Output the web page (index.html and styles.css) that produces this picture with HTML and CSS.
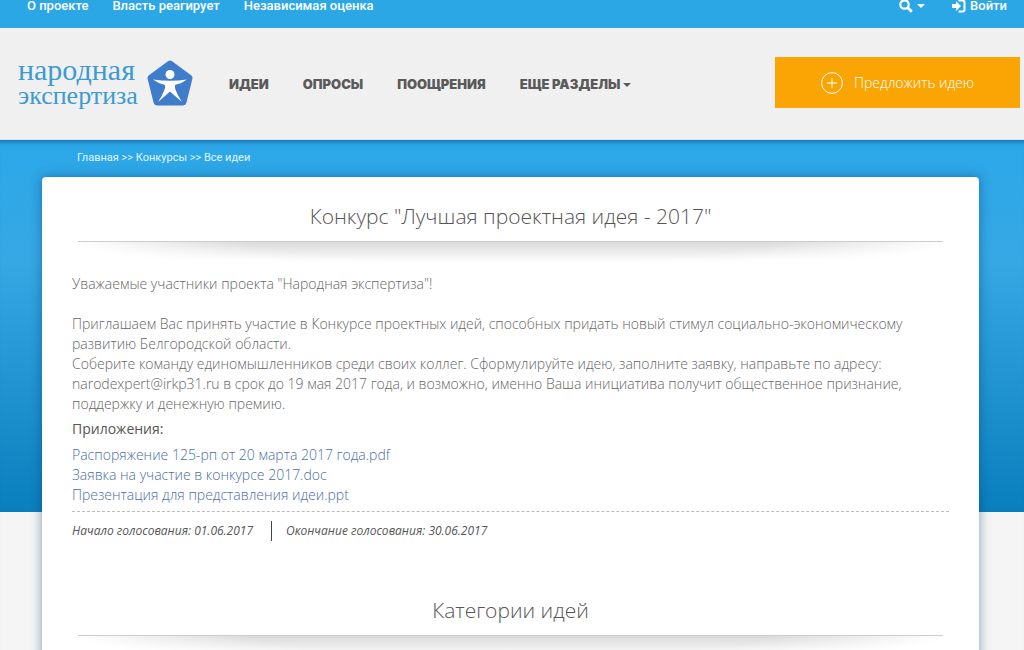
FILE: index.html
```html
<!DOCTYPE html>
<html lang="ru">
<head>
  <meta charset="UTF-8" />
  <meta name="viewport" content="width=device-width, initial-scale=1.0" />
  <title>Народная экспертиза</title>
  <link rel="stylesheet" href="styles.css">
</head>
<body>
  <div class="topbar">
    <nav class="topbar-links">
      <a href="#">О проекте</a>
      <a href="#">Власть реагирует</a>
      <a href="#">Независимая оценка</a>
    </nav>
    <div class="topbar-tools">
      <button class="search-btn" type="button" aria-label="Поиск">
        <svg width="14" height="14" viewBox="0 0 14 14"><circle cx="5.5" cy="5.5" r="4.2" fill="none" stroke="#fff" stroke-width="2.2"/><path d="M8.8 8.8l4 4" stroke="#fff" stroke-width="2.8"/></svg>
        <span class="caret"></span>
      </button>
      <a class="login" href="#">
        <svg width="14" height="14" viewBox="0 0 14 14"><path d="M0 5h4V2l5 5-5 5V9H0z" fill="#fff"/><path d="M6.5 1.5h4.3a1.7 1.7 0 0 1 1.7 1.7v7.6a1.7 1.7 0 0 1-1.7 1.7H6.5" fill="none" stroke="#fff" stroke-width="2"/></svg>
        Войти
      </a>
    </div>
  </div>

  <header class="header">
    <a class="logo" href="#">
      <span class="logo-text">
        <span class="logo-top">народная</span>
        <span>экспертиза</span>
      </span>
      <svg width="46" height="46" viewBox="0 0 46 46">
        <path d="M23 4L42 18L36 42H10L4 18Z" fill="#3f7dcc" stroke="#3f7dcc" stroke-width="7" stroke-linejoin="round"/>
        <circle cx="23" cy="14.5" r="4.5" fill="#fff"/>
        <path d="M6 19.5Q23 22 40 19.5Q34 24 28 25Q27.5 28 29 31Q31 36 35 42Q28 36 23 31.5Q18 36 11 42Q15 36 17 31Q18.5 28 18 25Q12 24 6 19.5Z" fill="#fff"/>
      </svg>
    </a>
    <nav class="menu">
      <a href="#">Идеи</a>
      <a href="#">Опросы</a>
      <a href="#">Поощрения</a>
      <a href="#">Еще разделы <span class="caret"></span></a>
    </nav>
    <button class="propose" type="button">
      <svg width="22" height="22" viewBox="0 0 22 22" fill="none" stroke="#fff"><circle cx="11" cy="11" r="10.4"/><path d="M11 6v10M6 11h10"/></svg>
      Предложить идею
    </button>
  </header>

  <main class="content">
    <nav class="breadcrumbs">
      <a href="#">Главная</a> &gt;&gt; <a href="#">Конкурсы</a> &gt;&gt; <a href="#">Все идеи</a>
    </nav>

    <div class="card">
      <h1 class="title">Конкурс "Лучшая проектная идея - 2017"</h1>
      <div class="divider"></div>

      <div class="text">
        <p>Уважаемые участники проекта "Народная экспертиза"!</p>
        <p>Приглашаем Вас принять участие в Конкурсе проектных идей, способных придать новый стимул социально-экономическому развитию Белгородской области.<br>
        Соберите команду единомышленников среди своих коллег. Сформулируйте идею, заполните заявку, направьте по адресу: narodexpert@irkp31.ru в срок до 19 мая 2017 года, и возможно, именно Ваша инициатива получит общественное признание, поддержку и денежную премию.</p>
      </div>

      <h2 class="files-title">Приложения:</h2>
      <ul class="files">
        <li><a href="#">Распоряжение 125-рп от 20 марта 2017 года.pdf</a></li>
        <li><a href="#">Заявка на участие в конкурсе 2017.doc</a></li>
        <li><a href="#">Презентация для представления идеи.ppt</a></li>
      </ul>

      <div class="dates">
        <span>Начало голосования: 01.06.2017</span>
        <span>Окончание голосования: 30.06.2017</span>
      </div>

      <h2 class="title">Категории идей</h2>
      <div class="divider"></div>
    </div>
  </main>
</body>
</html>
```
FILE: styles.css
```css
* {
  box-sizing: border-box;
}

body {
  margin: 0;
  background: #f5f5f5;
  font-family: "Open Sans", "Noto Sans", sans-serif;
  font-size: 14px;
  line-height: 20px;
  color: #555;
}

a {
  color: inherit;
  text-decoration: none;
}

button {
  border: 0;
  padding: 0;
  background: none;
  color: #fff;
  font-family: inherit;
  cursor: pointer;
}

.caret {
  display: inline-block;
  border-top: 4px solid;
  border-left: 4px solid transparent;
  border-right: 4px solid transparent;
}

.topbar {
  display: flex;
  justify-content: space-between;
  padding: 0 17px 16px 27px;
  background: #2ba7e6;
  color: #fff;
  font-family: Roboto, Arial, sans-serif;
  font-size: 13px;
  font-weight: 500;
  line-height: 12px;
}

.topbar-links {
  display: flex;
  gap: 24px;
}

.topbar-tools {
  display: flex;
  gap: 27px;
}

.search-btn,
.login {
  display: flex;
  align-items: center;
  gap: 4px;
  height: 12px;
}

.header {
  display: flex;
  align-items: center;
  height: 112px;
  padding: 0 4px 2px 18px;
  background: #f1f0f0;
  border-bottom: 1px solid #d5e6ee;
}

.logo {
  display: flex;
  align-items: center;
  gap: 9px;
}

.logo-text {
  display: flex;
  flex-direction: column;
  color: #3d9bd0;
  font-family: "Liberation Serif", "Times New Roman", serif;
  font-size: 26px;
  line-height: 26px;
}

.logo-top {
  font-size: 30px;
}

.menu {
  display: flex;
  gap: 34px;
  margin-left: 36px;
  padding-top: 2px;
  color: #5a5a5a;
  font-family: Inter, sans-serif;
  font-size: 13px;
  font-weight: 900;
  text-transform: uppercase;
}

.menu .caret {
  vertical-align: middle;
}

.propose {
  display: flex;
  align-items: center;
  justify-content: center;
  gap: 11px;
  width: 245px;
  height: 51px;
  margin-left: auto;
  background: #fba504;
  font-size: 14px;
  font-weight: 300;
}

.content {
  padding: 8px 45px 0 42px;
  background: linear-gradient(#2ba7e8 0, #36a8e4 120px, #0a7fbd 372px, #f5f5f5 372px);
  box-shadow: inset 0 6px 4px -4px rgba(0, 60, 110, 0.5);
}

.breadcrumbs {
  padding: 0 35px 9px;
  color: #e2f5ff;
  font-family: Roboto, Arial, sans-serif;
  font-size: 11px;
}

.card {
  padding: 24px 30px 30px;
  background: #fff;
  border-radius: 4px 4px 0 0;
  box-shadow: 0 0 12px rgba(0, 50, 110, 0.45);
}

.title {
  margin: 0;
  font-size: 21px;
  font-weight: 300;
  line-height: 30px;
  text-align: center;
}

.divider {
  height: 22px;
  margin: 10px 6px 0;
  border-top: 1px solid #ccc;
  background:
    radial-gradient(ellipse 50% 150% at 50% 0, transparent 60%, #fff),
    linear-gradient(#dadada, #fff);
}

.text {
  padding-top: 11px;
  color: #666;
  font-weight: 300;
}

.text p {
  margin: 0 0 20px;
}

.files-title {
  margin: -15px 0 6px;
  font-size: 14px;
  font-weight: 400;
  line-height: 20px;
}

.files {
  margin: 0;
  padding: 0 0 6px;
  border-bottom: 1px dashed #bbb;
  list-style: none;
  color: #4a6ea8;
  font-weight: 300;
}

.dates {
  display: flex;
  margin: 9px 0 54px;
  font-size: 12px;
  font-style: italic;
}

.dates span + span {
  margin-left: 18px;
  padding-left: 14px;
  border-left: 1px solid #444;
}
```
